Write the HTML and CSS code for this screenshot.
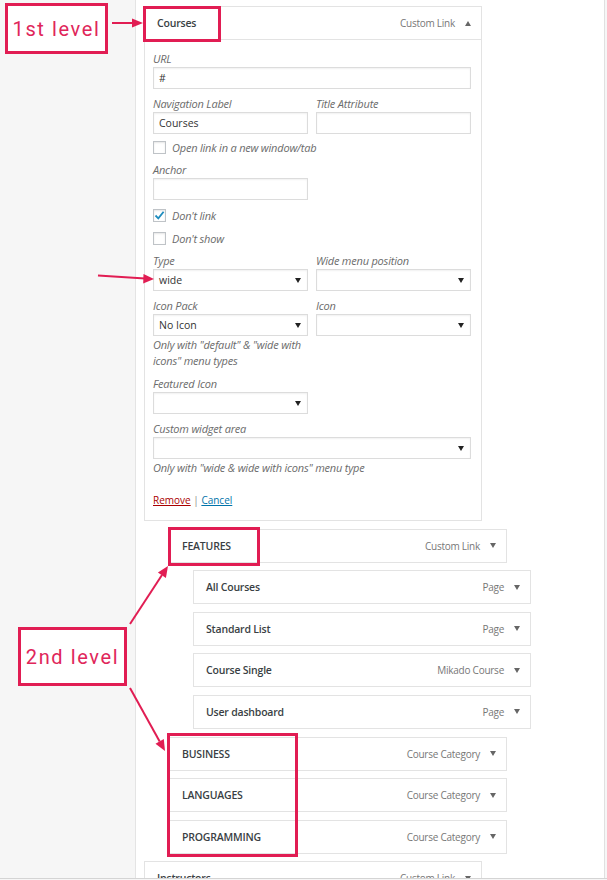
FILE: index.html
```html
<!DOCTYPE html>
<html lang="en">
<head>
    <meta charset="UTF-8">
    <meta name="viewport" content="width=device-width, initial-scale=1.0">
    <title>Menu Structure</title>
    <link rel="stylesheet" href="styles.css">
</head>
<body>
    <div class="frame">
        <aside class="side"></aside>
        <main class="menu">
            <!-- 1st level item, opened -->
            <div class="item">
                <div class="item-bar">
                    <span class="item-title">Courses</span>
                    <span class="item-meta">Custom Link <i class="caret up"></i></span>
                </div>
                <div class="item-settings">
                    <div class="field">
                        <label>URL</label>
                        <div class="input">#</div>
                    </div>
                    <div class="cols field">
                        <div>
                            <label>Navigation Label</label>
                            <div class="input">Courses</div>
                        </div>
                        <div>
                            <label>Title Attribute</label>
                            <div class="input"></div>
                        </div>
                    </div>
                    <div class="check first-check"><span class="box"></span><span>Open link in a new window/tab</span></div>
                    <div class="field half">
                        <label>Anchor</label>
                        <div class="input"></div>
                    </div>
                    <div class="check">
                        <span class="box">
                            <svg width="11" height="11" viewBox="0 0 11 11"><path d="M1.5 5.5 L4.3 8.3 L9.6 1.8" fill="none" stroke="#1e8cbe" stroke-width="1.8"/></svg>
                        </span>
                        <span>Don't link</span>
                    </div>
                    <div class="check"><span class="box"></span><span>Don't show</span></div>
                    <div class="cols field">
                        <div>
                            <label>Type</label>
                            <div class="input select">wide<i class="arrow"></i></div>
                        </div>
                        <div>
                            <label>Wide menu position</label>
                            <div class="input select"><i class="arrow"></i></div>
                        </div>
                    </div>
                    <div class="cols field">
                        <div>
                            <label>Icon Pack</label>
                            <div class="input select">No Icon<i class="arrow"></i></div>
                            <p class="help">Only with "default" &amp; "wide with<br>icons" menu types</p>
                        </div>
                        <div>
                            <label>Icon</label>
                            <div class="input select"><i class="arrow"></i></div>
                        </div>
                    </div>
                    <div class="field half">
                        <label>Featured Icon</label>
                        <div class="input select"><i class="arrow"></i></div>
                    </div>
                    <div class="field">
                        <label>Custom widget area</label>
                        <div class="input select"><i class="arrow"></i></div>
                        <p class="help">Only with "wide &amp; wide with icons" menu type</p>
                    </div>
                    <div class="actions">
                        <a href="#" class="remove">Remove</a> | <a href="#" class="cancel">Cancel</a>
                    </div>
                </div>
            </div>

            <div class="item depth-1"><div class="item-bar"><span class="item-title">FEATURES</span><span class="item-meta">Custom Link <i class="caret"></i></span></div></div>
            <div class="item depth-2"><div class="item-bar"><span class="item-title">All Courses</span><span class="item-meta">Page <i class="caret"></i></span></div></div>
            <div class="item depth-2"><div class="item-bar"><span class="item-title">Standard List</span><span class="item-meta">Page <i class="caret"></i></span></div></div>
            <div class="item depth-2"><div class="item-bar"><span class="item-title">Course Single</span><span class="item-meta">Mikado Course <i class="caret"></i></span></div></div>
            <div class="item depth-2"><div class="item-bar"><span class="item-title">User dashboard</span><span class="item-meta">Page <i class="caret"></i></span></div></div>
            <div class="item depth-1"><div class="item-bar"><span class="item-title">BUSINESS</span><span class="item-meta">Course Category <i class="caret"></i></span></div></div>
            <div class="item depth-1"><div class="item-bar"><span class="item-title">LANGUAGES</span><span class="item-meta">Course Category <i class="caret"></i></span></div></div>
            <div class="item depth-1"><div class="item-bar"><span class="item-title">PROGRAMMING</span><span class="item-meta">Course Category <i class="caret"></i></span></div></div>
            <div class="item"><div class="item-bar"><span class="item-title">Instructors</span><span class="item-meta">Custom Link <i class="caret"></i></span></div></div>
        </main>

        <!-- annotations drawn over the screenshot -->
        <div class="note note-1">1st level</div>
        <div class="note note-2">2nd level</div>
        <div class="mark mark-courses"></div>
        <div class="mark mark-features"></div>
        <div class="mark mark-cats"></div>
        <svg class="arrows" width="607" height="880" viewBox="0 0 607 880">
            <g stroke="#e11d53" stroke-width="2" fill="none">
                <line x1="112" y1="23" x2="134" y2="23"/>
                <line x1="98" y1="275.5" x2="145" y2="278.6"/>
                <line x1="130" y1="624" x2="162" y2="575"/>
                <line x1="130" y1="688" x2="159.7" y2="741.4"/>
            </g>
            <g fill="#e11d53">
                <polygon points="143,23 132,18.5 132,27.5"/>
                <polygon points="154,279 143.5,274 143.2,283.5"/>
                <polygon points="168,566 165.9,578 157.9,572.6"/>
                <polygon points="165,751 163.8,739 155.5,743.7"/>
            </g>
        </svg>
    </div>
</body>
</html>
```

FILE: styles.css
```css
body { margin: 0; background: #f6f6f6; font-family: "Open Sans", "Noto Sans", sans-serif; color: #333; }
.frame { position: relative; display: flex; height: 878px; border-bottom: 1px solid #d4d4d4; overflow: hidden; }
.side { width: 135px; flex: none; background: #f6f6f6; border-right: 1px solid #e4e4e4; }
.menu { width: 469px; flex: none; box-sizing: border-box; background: #fff; border-right: 1px solid #e0e0e0; padding: 6px 0 0 8px; }

.item { width: 338px; margin-top: 7.6px; }
.item:first-child { margin-top: 0; }
.depth-1 { margin-left: 25px; }
.depth-2 { margin-left: 49px; }
.item-bar { height: 34px; box-sizing: border-box; border: 1px solid #e3e3e3; background: #fff; display: flex; align-items: center; justify-content: space-between; padding: 0 10px 0 12px; }
.item-title { font-size: 10.5px; font-weight: 600; color: #3a3f44; letter-spacing: -0.2px; }
.item-meta { font-size: 10px; color: #777; display: flex; align-items: center; letter-spacing: -0.25px; }
.caret { display: inline-block; margin-left: 10px; width: 0; height: 0; border-left: 3.5px solid transparent; border-right: 3.5px solid transparent; border-top: 5px solid #666; }
.caret.up { border-top: none; border-bottom: 5px solid #666; }

.item-settings { border: 1px solid #e3e3e3; border-top: none; padding: 11px 10px 12px 8px; }
.field { margin-top: 7px; }
.field:first-child { margin-top: 0; }
.half { width: 155px; }
.cols { display: grid; grid-template-columns: 155px 155px; column-gap: 8px; }
label { display: block; font-size: 11px; line-height: 16px; font-style: italic; color: #6b6b6b; letter-spacing: -0.2px; }
.input { position: relative; height: 22px; box-sizing: border-box; border: 1px solid #dcdcdc; box-shadow: inset 0 1px 2px rgba(0,0,0,0.06); background: #fff; padding: 0 5px; font-size: 10.5px; line-height: 20px; color: #333; }
.arrow { position: absolute; right: 6px; top: 8px; width: 0; height: 0; border-left: 3.5px solid transparent; border-right: 3.5px solid transparent; border-top: 5px solid #222; }
.help { margin: 1px 0 0; font-size: 11px; line-height: 16px; font-style: italic; color: #6b6b6b; letter-spacing: -0.2px; }

.check { display: flex; align-items: center; gap: 6px; height: 16px; margin-top: 7px; font-size: 11px; font-style: italic; color: #6b6b6b; letter-spacing: -0.2px; }
.first-check { margin-top: 5px; }
.box { width: 13px; height: 13px; box-sizing: border-box; border: 1px solid #bfc3c7; box-shadow: inset 0 1px 2px rgba(0,0,0,0.1); background: #fff; display: flex; align-items: center; justify-content: center; }

.actions { margin-top: 16px; font-size: 10px; line-height: 16px; color: #888; }
.actions a { text-decoration: underline; }
.remove { color: #a00; }
.cancel { color: #0073aa; }

.note { position: absolute; box-sizing: border-box; border: 3px solid #e11d53; display: flex; align-items: center; justify-content: center; font-family: Roboto, "Open Sans", sans-serif; font-size: 20px; letter-spacing: 1.6px; color: #e0265a; background: #fff; }
.note-1 { left: 5px; top: 3px; width: 103px; height: 51px; }
.note-2 { left: 18px; top: 627px; width: 109px; height: 59px; }
.mark { position: absolute; box-sizing: border-box; border: 3px solid #e11d53; }
.mark-courses { left: 143px; top: 6px; width: 78px; height: 36px; }
.mark-features { left: 168px; top: 527px; width: 92px; height: 39px; }
.mark-cats { left: 167px; top: 733px; width: 131px; height: 124px; }
.arrows { position: absolute; left: 0; top: 0; pointer-events: none; }
```
